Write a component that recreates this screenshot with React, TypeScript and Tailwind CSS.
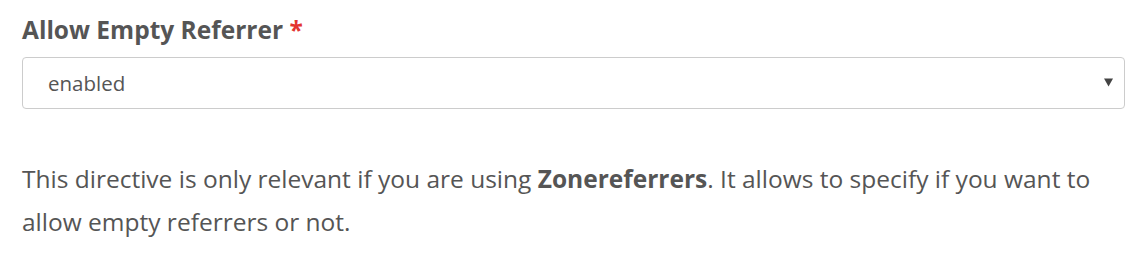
export default function App() {
  return (
    <div className="w-[1135px] h-[263px] bg-white px-[22px] pt-[12px] font-['Open_Sans',sans-serif] text-[#555]">
      <label className="block text-[24.5px] font-bold leading-[36px] text-[#555]">
        Allow Empty Referrer <span className="text-[#e3342f]">*</span>
      </label>
      <div className="relative mt-[9px] w-[1103px]">
        <select
          defaultValue="enabled"
          className="block h-[52px] w-full appearance-none rounded-[4px] border border-[#ccc] bg-white pl-[25px] text-[20.5px] text-[#555] outline-none"
        >
          <option value="enabled">enabled</option>
          <option value="disabled">disabled</option>
        </select>
        <svg
          className="pointer-events-none absolute right-[12px] top-[21px]"
          width="9"
          height="9"
          viewBox="0 0 9 9"
        >
          <path d="M0 0.5 H9 L4.5 8.5 Z" fill="#444" />
        </svg>
      </div>
      <p className="mt-[48px] text-[24.5px] leading-[43.2px]">
        This directive is only relevant if you are using <strong className="font-bold">Zonereferrers</strong>. It allows to specify if you want to allow empty referrers or not.
      </p>
    </div>
  );
}
